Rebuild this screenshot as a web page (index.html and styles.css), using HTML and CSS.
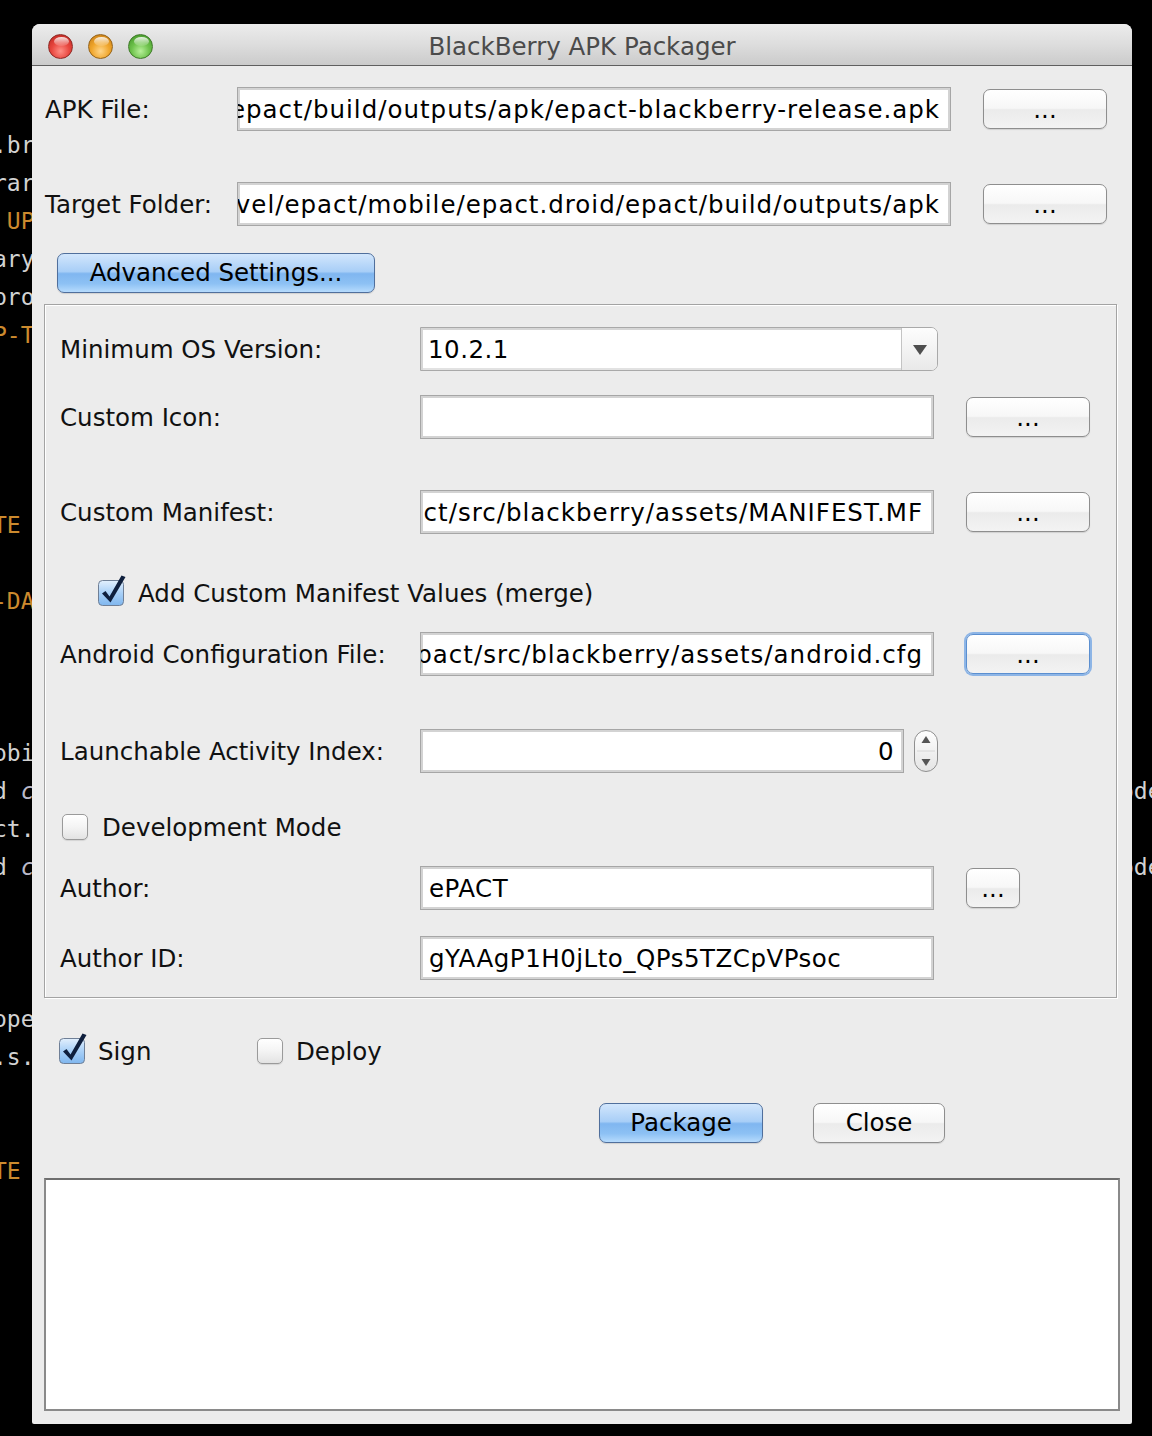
FILE: index.html
```html
<!DOCTYPE html>
<html>
<head>
<meta charset="utf-8">
<title>BlackBerry APK Packager</title>
<link rel="stylesheet" href="styles.css">
</head>
<body>
<div class="code code-left">
  <div class="ln">.bra</div>
  <div class="ln">rary</div>
  <div class="ln kw"> UPD</div>
  <div class="ln">ary_</div>
  <div class="ln">proj</div>
  <div class="ln kw">P-TY</div>
  <div class="ln"></div>
  <div class="ln"></div>
  <div class="ln"></div>
  <div class="ln"></div>
  <div class="ln kw">TE</div>
  <div class="ln"></div>
  <div class="ln kw">-DAT</div>
  <div class="ln"></div>
  <div class="ln"></div>
  <div class="ln"></div>
  <div class="ln">obil</div>
  <div class="ln">d <i>c</i>o</div>
  <div class="ln">ct.g</div>
  <div class="ln">d <i>c</i>o</div>
  <div class="ln"></div>
  <div class="ln"></div>
  <div class="ln"></div>
  <div class="ln">open</div>
  <div class="ln">.s.b</div>
  <div class="ln"></div>
  <div class="ln"></div>
  <div class="ln kw">TE</div>
</div>
<div class="code code-right">
  <div class="ln">ode</div>
  <div class="ln"></div>
  <div class="ln">ode</div>
</div>

<div class="window">
  <div class="titlebar">
    <span class="light red"></span>
    <span class="light amber"></span>
    <span class="light green"></span>
    <div class="title">BlackBerry APK Packager</div>
  </div>

  <div class="content">
    <div class="row top-row">
      <label class="lbl top-lbl">APK File:</label>
      <div class="field wide tail"><span class="val path">/Users/dev/devel/epact/mobile/epact.droid/epact/build/outputs/apk/epact-blackberry-release.apk</span></div>
      <button class="btn browse">...</button>
    </div>

    <div class="row top-row second">
      <label class="lbl top-lbl">Target Folder:</label>
      <div class="field wide tail"><span class="val path">/Users/dev/devel/epact/mobile/epact.droid/epact/build/outputs/apk</span></div>
      <button class="btn browse">...</button>
    </div>

    <button class="btn blue advanced">Advanced Settings...</button>

    <div class="panel">
      <div class="prow first">
        <label class="lbl plbl">Minimum OS Version:</label>
        <div class="combo">
          <span class="combo-val">10.2.1</span>
          <span class="combo-arrow"><span class="tri"></span></span>
        </div>
      </div>

      <div class="prow gap-m">
        <label class="lbl plbl">Custom Icon:</label>
        <div class="field pfield"><span class="val"></span></div>
        <button class="btn browse">...</button>
      </div>

      <div class="prow gap-l">
        <label class="lbl plbl">Custom Manifest:</label>
        <div class="field pfield tail"><span class="val path">/Users/dev/devel/epact/mobile/epact.droid/epact/src/blackberry/assets/MANIFEST.MF</span></div>
        <button class="btn browse">...</button>
      </div>

      <div class="prow crow merge">
        <span class="cb checked">
          <svg width="26" height="26" viewBox="0 0 26 26" class="cb-svg">
            <defs>
              <linearGradient id="gb1" x1="0" y1="0" x2="0" y2="1">
                <stop offset="0" stop-color="#e3f0fd"/>
                <stop offset="0.5" stop-color="#a9d0f7"/>
                <stop offset="1" stop-color="#7fb6ee"/>
              </linearGradient>
            </defs>
            <rect x="0.5" y="0.5" width="25" height="25" rx="4" fill="url(#gb1)" stroke="#6f7f96"/>
            <path d="M4 13.5 L7.5 11 L11.5 16.5 L23.5 -4.5 L27.5 -3 L12.5 22.5 Z" fill="#0f1f3d"/>
          </svg>
        </span>
        <span class="cb-text">Add Custom Manifest Values (merge)</span>
      </div>

      <div class="prow gap-s">
        <label class="lbl plbl">Android Configuration File:</label>
        <div class="field pfield tail"><span class="val path">/Users/dev/devel/epact/mobile/epact.droid/epact/src/blackberry/assets/android.cfg</span></div>
        <button class="btn browse focus">...</button>
      </div>

      <div class="prow gap-xl">
        <label class="lbl plbl">Launchable Activity Index:</label>
        <div class="field spinfield tail"><span class="val num">0</span></div>
        <svg class="spinner" width="24" height="42" viewBox="0 0 24 42">
          <defs>
            <linearGradient id="gsp" x1="0" y1="0" x2="0" y2="1">
              <stop offset="0" stop-color="#ffffff"/>
              <stop offset="0.5" stop-color="#f1f1f1"/>
              <stop offset="1" stop-color="#e4e4e4"/>
            </linearGradient>
          </defs>
          <rect x="0.5" y="0.5" width="23" height="41" rx="11.5" fill="url(#gsp)" stroke="#8f8f8f"/>
          <line x1="3" y1="21" x2="21" y2="21" stroke="#d6d6d6"/>
          <path d="M7.5 13 L16.5 13 L12 6 Z" fill="#555"/>
          <path d="M7.5 29 L16.5 29 L12 36 Z" fill="#555"/>
        </svg>
      </div>

      <div class="prow crow dev">
        <span class="cb"></span>
        <span class="cb-text">Development Mode</span>
      </div>

      <div class="prow gap-s">
        <label class="lbl plbl">Author:</label>
        <div class="field pfield"><span class="val">ePACT</span></div>
        <button class="btn browse small">...</button>
      </div>

      <div class="prow gap-author">
        <label class="lbl plbl">Author ID:</label>
        <div class="field pfield"><span class="val">gYAAgP1H0jLto_QPs5TZCpVPsoc</span></div>
      </div>
    </div>

    <div class="opts">
      <div class="opt sign">
        <span class="cb checked">
          <svg width="26" height="26" viewBox="0 0 26 26" class="cb-svg">
            <defs>
              <linearGradient id="gb2" x1="0" y1="0" x2="0" y2="1">
                <stop offset="0" stop-color="#e3f0fd"/>
                <stop offset="0.5" stop-color="#a9d0f7"/>
                <stop offset="1" stop-color="#7fb6ee"/>
              </linearGradient>
            </defs>
            <rect x="0.5" y="0.5" width="25" height="25" rx="4" fill="url(#gb2)" stroke="#6f7f96"/>
            <path d="M4 13.5 L7.5 11 L11.5 16.5 L23.5 -4.5 L27.5 -3 L12.5 22.5 Z" fill="#0f1f3d"/>
          </svg>
        </span>
        <span class="cb-text">Sign</span>
      </div>
      <div class="opt">
        <span class="cb"></span>
        <span class="cb-text">Deploy</span>
      </div>
    </div>

    <div class="actions">
      <button class="btn blue package">Package</button>
      <button class="btn close">Close</button>
    </div>

    <div class="log"></div>
  </div>
</div>
</body>
</html>
```

FILE: styles.css
```css
* { box-sizing: border-box; }

html, body {
  margin: 0;
  padding: 0;
}

body {
  width: 1152px;
  height: 1436px;
  background: #000;
  position: relative;
  overflow: hidden;
  font-family: "DejaVu Sans", "Noto Sans", sans-serif;
  font-size: 24.5px;
  color: #111;
}

/* background editor text (behind the window) */
.code {
  position: absolute;
  top: 126px;
  font-family: "DejaVu Sans Mono", "Liberation Mono", monospace;
  font-size: 23px;
  line-height: 38px;
  color: #d2d2d2;
}
.code-left { left: -7px; }
.code-right { left: 1120px; top: 772px; }
.ln {
  height: 38px;
  white-space: pre;
}
.ln i { color: #b9b9c9; }
.kw { color: #cc8a2e; }

/* window */
.window {
  position: absolute;
  left: 32px;
  top: 24px;
  width: 1100px;
  height: 1400px;
  background: #ececec;
  border-radius: 8px 8px 2px 2px;
  overflow: hidden;
}

.titlebar {
  position: relative;
  height: 42px;
  background: linear-gradient(to bottom, #ececec 0%, #dddddd 50%, #cbcbcb 100%);
  border-bottom: 1px solid #5f5f5f;
  display: flex;
  align-items: center;
  justify-content: center;
}

.title {
  color: #4b4b4b;
  font-size: 24.5px;
  line-height: 42px;
  padding-top: 4px;
}

.light {
  position: absolute;
  top: 10px;
  width: 25px;
  height: 25px;
  border-radius: 50%;
}
.light::after {
  content: "";
  position: absolute;
  left: 5px;
  top: 2px;
  width: 15px;
  height: 9px;
  border-radius: 50%;
  background: linear-gradient(to bottom, rgba(255,255,255,0.85), rgba(255,255,255,0.1));
}
.red {
  left: 16px;
  background: radial-gradient(circle at 50% 70%, #ff8f86 0%, #e8473f 45%, #b8201b 100%);
  border: 1px solid #8e2a26;
}
.amber {
  left: 56px;
  background: radial-gradient(circle at 50% 70%, #ffd68a 0%, #f0a62c 45%, #c27812 100%);
  border: 1px solid #95631a;
}
.green {
  left: 96px;
  background: radial-gradient(circle at 50% 70%, #b8f09a 0%, #6ec24c 45%, #3b8f22 100%);
  border: 1px solid #3f7a2a;
}

.content {
  padding-top: 21px;
}

/* generic */
.lbl {
  display: block;
  flex: none;
  white-space: nowrap;
  color: #111;
}

.field {
  flex: none;
  height: 44px;
  background: #fff;
  border: 1px solid #a6a6a6;
  box-shadow: inset 0 0 0 2px #d3d3d3;
  display: flex;
  align-items: center;
  justify-content: flex-start;
  overflow: hidden;
  padding: 0 10px 0 8px;
  white-space: nowrap;
}
.field.tail { justify-content: flex-end; }
.val {
  flex: none;
  letter-spacing: 0.5px;
  color: #000;
}
.val.path { letter-spacing: 1px; }

.btn {
  flex: none;
  font-family: inherit;
  font-size: 24.5px;
  color: #000;
  height: 40px;
  padding: 0;
  border: 1px solid #8e8e8e;
  border-radius: 7px;
  background: linear-gradient(to bottom, #ffffff 0%, #f7f7f7 48%, #ebebeb 52%, #f3f3f3 100%);
  box-shadow: 0 1px 1px rgba(0,0,0,0.12);
  line-height: 36px;
}

.btn.blue {
  border: 1px solid #506f9c;
  background: linear-gradient(to bottom, #d2e6fc 0%, #a8cef7 46%, #80b6f0 52%, #8dc1f4 78%, #b6dbfd 100%);
}

.browse {
  width: 124px;
  margin-left: 32px;
  line-height: 40px;
}
.browse.small { width: 54px; }
.browse.focus {
  border: 1px solid #5b8fd0;
  box-shadow: 0 0 0 2px #8db5e6;
}

/* top rows */
.row {
  display: flex;
  align-items: center;
}
.top-row {
  height: 44px;
  padding-left: 13px;
}
.top-row.second {
  margin-top: 51px;
}
.top-lbl { width: 192px; }
.field.wide { width: 714px; }

.advanced {
  display: block;
  margin: 27px 0 0 25px;
  width: 318px;
}

/* advanced panel */
.panel {
  margin: 11px 0 0 12px;
  width: 1073px;
  height: 694px;
  border: 1px solid #a3a3a3;
  box-shadow: inset 1px 1px 0 #ffffff, 1px 1px 0 #ffffff;
  padding: 22px 0 0 15px;
}

.prow {
  display: flex;
  align-items: center;
  height: 44px;
}
.prow.first { margin-top: 0; }
.prow.gap-m { margin-top: 24px; }
.prow.gap-l { margin-top: 51px; }
.prow.gap-s { margin-top: 17px; }
.prow.gap-xl { margin-top: 53px; }
.prow.gap-author { margin-top: 26px; }
.prow.merge { margin-top: 37px; padding-left: 38px; }
.prow.dev { margin-top: 32px; padding-left: 2px; }

.plbl { width: 360px; }
.field.pfield { width: 514px; }

.combo {
  flex: none;
  width: 518px;
  height: 44px;
  display: flex;
  border: 1px solid #a9a9a9;
  border-radius: 0 7px 7px 0;
  background: #fff;
  overflow: hidden;
}
.combo-val {
  flex: 1;
  display: flex;
  align-items: center;
  padding-left: 7px;
  letter-spacing: 0.5px;
  color: #000;
  box-shadow: inset 2px 2px 0 #d6d6d6, inset 0 -2px 0 #e2e2e2;
}
.combo-arrow {
  flex: none;
  width: 36px;
  border-left: 1px solid #c4c4c4;
  background: linear-gradient(to bottom, #fdfdfd 0%, #f3f3f3 50%, #e9e9e9 100%);
  display: flex;
  align-items: center;
  justify-content: center;
}
.tri {
  width: 0;
  height: 0;
  border-left: 7px solid transparent;
  border-right: 7px solid transparent;
  border-top: 10px solid #4e4e4e;
  margin-top: 1px;
}

.field.spinfield {
  width: 484px;
  padding-right: 9px;
}
.spinner {
  flex: none;
  margin-left: 10px;
  display: block;
}

/* checkboxes */
.cb {
  flex: none;
  width: 26px;
  height: 26px;
  border: 1px solid #9a9a9a;
  border-radius: 5px;
  background: linear-gradient(to bottom, #ffffff 0%, #f4f4f4 50%, #e3e3e3 100%);
  box-shadow: 0 1px 1px rgba(0,0,0,0.1);
}
.cb.checked {
  border: none;
  background: none;
  box-shadow: none;
}
.cb-svg {
  display: block;
  overflow: visible;
}
.cb-text {
  margin-left: 14px;
  white-space: nowrap;
  color: #111;
}

/* sign / deploy */
.opts {
  display: flex;
  align-items: center;
  height: 44px;
  margin-top: 31px;
  padding-left: 27px;
}
.opt {
  display: flex;
  align-items: center;
}
.opt.sign { width: 198px; }
.opt .cb-text { margin-left: 13px; }

.actions {
  display: flex;
  margin-top: 30px;
  padding-left: 567px;
}
.package { width: 164px; }
.close { width: 132px; margin-left: 50px; }

.log {
  margin: 35px 0 0 12px;
  width: 1076px;
  height: 233px;
  background: #fff;
  border: 2px solid #8a8a8a;
  border-top-color: #6e6e6e;
}
```
